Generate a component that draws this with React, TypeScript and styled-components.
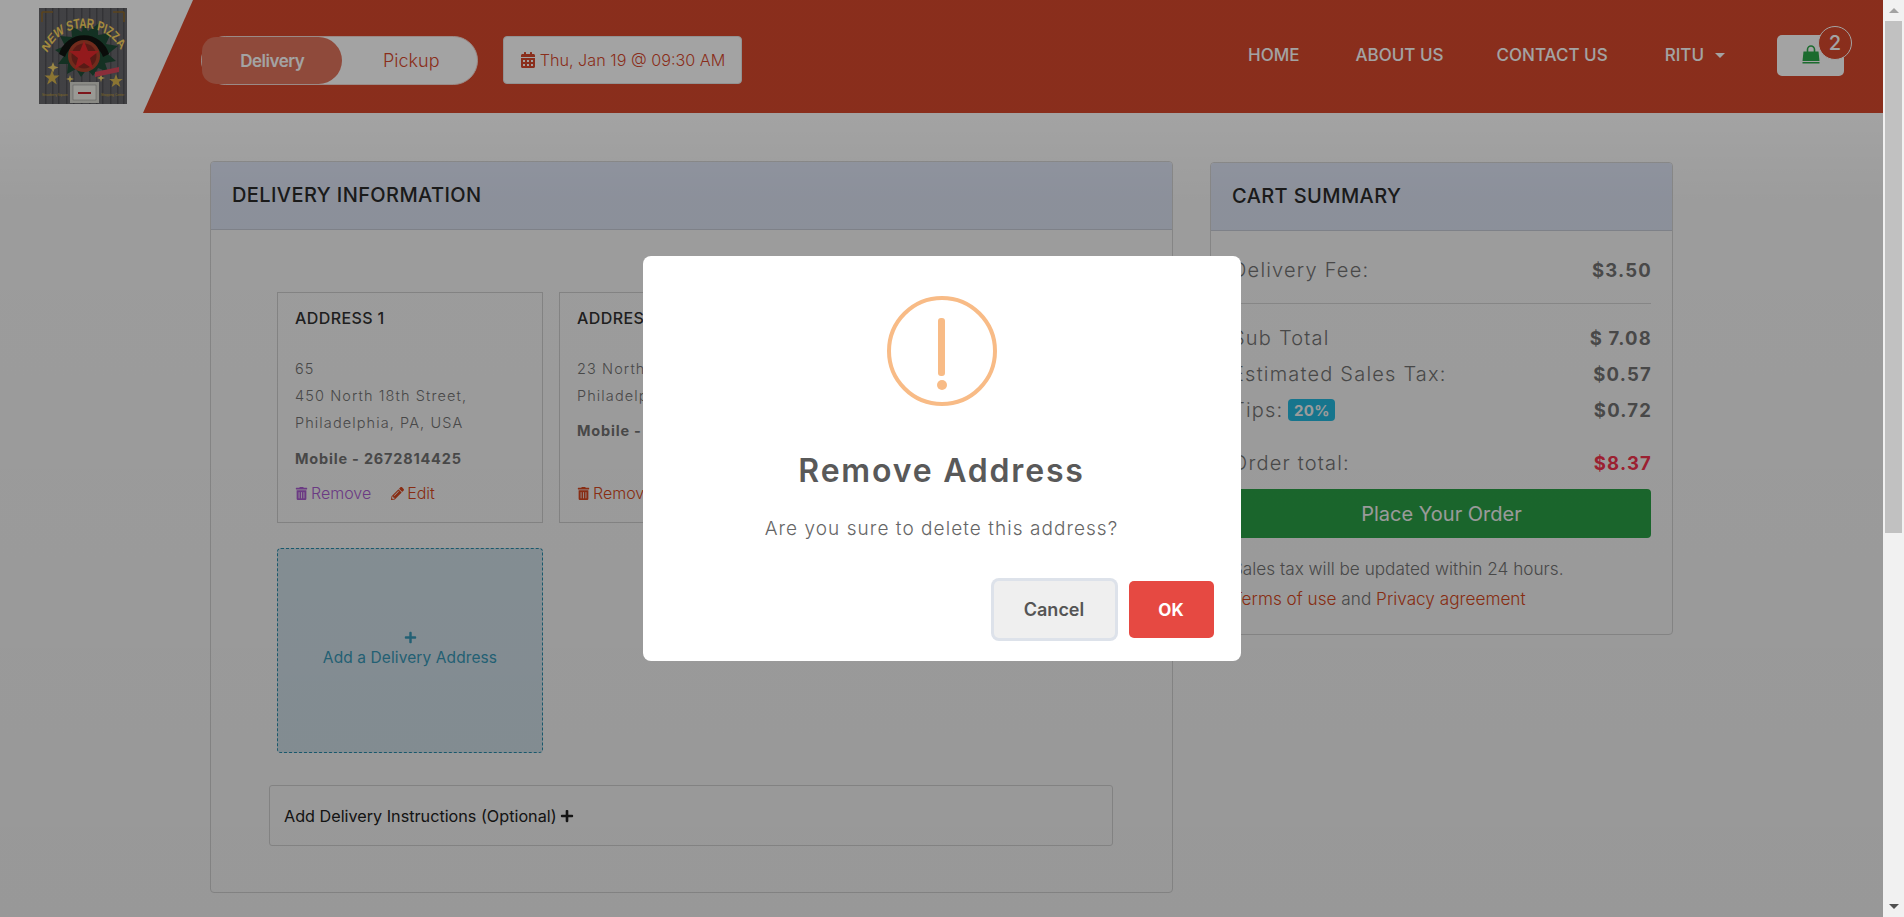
import React from 'react';
import styled, { createGlobalStyle } from 'styled-components';
import { FaCalendarAlt, FaTrashAlt, FaPencilAlt, FaPlus } from 'react-icons/fa';

const FONT = `Inter, "Open Sans", "Liberation Sans", sans-serif`;

const GlobalStyle = createGlobalStyle`
  html, body {
    margin: 0;
    height: 100%;
    overflow: hidden;
    background: #fff;
    font-family: ${FONT};
  }
  * { box-sizing: border-box; }
`;

const Shell = styled.div`
  display: flex;
  width: 1904px;
  height: 917px;
  overflow: hidden;
`;

const Page = styled.div`
  position: relative;
  width: 1883px;
  height: 917px;
  flex: none;
  background: #fff;
`;

const Scrollbar = styled.div`
  width: 21px;
  flex: none;
  background: #f1f1f1;
  display: flex;
  flex-direction: column;
  align-items: center;
`;

const ScrollArrow = styled.div<{ $down?: boolean }>`
  height: 21px;
  flex: none;
  display: flex;
  align-items: center;
  justify-content: center;
  &::before {
    content: '';
    border-left: 5px solid transparent;
    border-right: 5px solid transparent;
    ${p => (p.$down ? 'border-top: 5px solid #505050;' : 'border-bottom: 5px solid #a3a3a3;')}
  }
`;

const ScrollThumb = styled.div`
  width: 17px;
  height: 512px;
  background: #c1c1c1;
`;

const ScrollRest = styled.div`
  flex: 1;
`;

const Header = styled.header`
  display: flex;
  height: 113px;
`;

const LogoSlot = styled.div`
  width: 143px;
  flex: none;
  padding: 8px 0 0 39px;
`;

const RedBar = styled.div`
  flex: 1;
  display: flex;
  align-items: flex-start;
  padding: 36px 39px 0 58px;
  background: #d7482c;
  clip-path: polygon(50px 0, 100% 0, 100% 100%, 0 100%);
`;

const Toggle = styled.div`
  width: 277px;
  height: 49px;
  display: flex;
  align-items: center;
  background: #fff;
  border: 1px solid #f2d8d2;
  border-radius: 25px;
`;

const ToggleOption = styled.div<{ $active?: boolean }>`
  height: 47px;
  display: flex;
  align-items: center;
  justify-content: center;
  width: ${p => (p.$active ? '141px' : '135px')};
  font-size: ${p => (p.$active ? '17px' : '18px')};
  font-weight: ${p => (p.$active ? 600 : 300)};
  letter-spacing: ${p => (p.$active ? '-0.5px' : '0')};
  color: ${p => (p.$active ? '#fff' : '#d7482c')};
  background: ${p => (p.$active ? '#df735c' : 'transparent')};
  border-radius: ${p => (p.$active ? '24px 40px 40px 24px' : '0')};
  padding-left: ${p => (p.$active ? '0' : '3px')};
`;

const DateButton = styled.div`
  margin-left: 25px;
  width: 239px;
  height: 48px;
  display: flex;
  align-items: center;
  justify-content: center;
  gap: 4px;
  background: #fff;
  border: 1px solid #e4e4e4;
  border-radius: 4px;
  color: #d7482c;
  font-size: 16.2px;
  font-weight: 300;
  svg { font-size: 16px; }
`;

const Nav = styled.nav`
  margin-left: auto;
  display: flex;
  align-items: center;
  height: 38px;
`;

const NavLink = styled.a<{ $gap: number }>`
  margin-right: ${p => p.$gap}px;
  display: flex;
  align-items: center;
  gap: 11px;
  color: #fff;
  font-size: 17px;
  font-weight: 500;
  white-space: nowrap;
`;

const Caret = styled.span`
  border-left: 5px solid transparent;
  border-right: 5px solid transparent;
  border-top: 5px solid #fff;
`;

const CartButton = styled.div`
  position: relative;
  width: 67px;
  height: 41px;
  background: #fff;
  border-radius: 5px;
  padding: 10px 0 0 25px;
`;

const CartBadge = styled.span`
  position: absolute;
  top: -9px;
  right: -8px;
  width: 34px;
  height: 34px;
  display: flex;
  align-items: center;
  justify-content: center;
  border: 1px solid #fff;
  border-radius: 50%;
  background: #d7482c;
  color: #fff;
  font-size: 20px;
  font-weight: 500;
`;

const Main = styled.main`
  display: flex;
  align-items: flex-start;
  gap: 37px;
  padding: 48px 0 0 210px;
`;

const Panel = styled.section<{ $width: number; $top?: number }>`
  width: ${p => p.$width}px;
  margin-top: ${p => p.$top ?? 0}px;
  flex: none;
  border: 1px solid #d9d9d9;
  border-radius: 4px;
`;

const PanelHeader = styled.div`
  height: 68px;
  display: flex;
  align-items: center;
  padding: 0 21px 2px;
  background: #e4ebfc;
  border-bottom: 1px solid #ced3de;
  border-radius: 3px 3px 0 0;
`;

const PanelTitle = styled.h2`
  margin: 0;
  font-size: 20px;
  font-weight: 500;
  letter-spacing: 0.4px;
  color: #2b2b2b;
`;

const DeliveryBody = styled.div`
  padding: 62px 60px 46px 66px;
`;

const AddressRow = styled.div`
  display: flex;
  gap: 16px;
`;

const AddressCard = styled.div`
  width: 266px;
  height: 231px;
  flex: none;
  padding: 14px 17px;
  border: 1px solid #d6d6d6;
`;

const AddressTitle = styled.div`
  height: 22px;
  line-height: 22px;
  margin-bottom: 26px;
  font-size: 16px;
  font-weight: 500;
  letter-spacing: 0.4px;
  color: #333;
`;

const AddressLine = styled.div`
  height: 27px;
  line-height: 27px;
  font-size: 14.5px;
  font-weight: 300;
  letter-spacing: 1.1px;
  color: #777;
  white-space: nowrap;
`;

const Mobile = styled.div<{ $top: number }>`
  margin-top: ${p => p.$top}px;
  height: 24px;
  line-height: 24px;
  font-size: 14.5px;
  font-weight: 700;
  letter-spacing: 0.8px;
  color: #777;
  white-space: nowrap;
`;

const AddressActions = styled.div<{ $top: number }>`
  margin-top: ${p => p.$top}px;
  display: flex;
  gap: 20px;
`;

const ActionLink = styled.a<{ $color: string }>`
  display: flex;
  align-items: center;
  gap: 3px;
  height: 24px;
  font-size: 16px;
  font-weight: 300;
  color: ${p => p.$color};
  svg { font-size: 13px; }
`;

const AddCard = styled.div`
  width: 266px;
  height: 205px;
  margin-top: 25px;
  display: flex;
  flex-direction: column;
  align-items: center;
  justify-content: center;
  gap: 4px;
  padding-bottom: 3px;
  background: #d9e9f2;
  border: 1px dashed #2a93b3;
  border-radius: 4px;
  color: #3a9fc0;
  font-size: 15.5px;
  font-weight: 400;
  letter-spacing: 0.1px;
  svg { font-size: 13px; }
`;

const Instructions = styled.div`
  width: 844px;
  height: 61px;
  margin: 32px 0 0 -8px;
  display: flex;
  align-items: center;
  gap: 3px;
  padding: 0 14px;
  border: 1px solid #d9d9d9;
  border-radius: 3px;
  font-size: 16.2px;
  font-weight: 400;
  color: #222;
  svg { font-size: 14px; }
`;

const CartBody = styled.div`
  padding: 21px 21px 20px;
`;

const SummaryRow = styled.div<{ $top?: number }>`
  display: flex;
  justify-content: space-between;
  align-items: center;
  height: 36px;
  margin-top: ${p => p.$top ?? 0}px;
`;

const SummaryLabel = styled.span`
  display: flex;
  align-items: center;
  gap: 5px;
  font-size: 20px;
  font-weight: 300;
  letter-spacing: 1.2px;
  color: #777;
`;

const SummaryValue = styled.span<{ $color?: string }>`
  margin-right: -1px;
  font-size: 18.5px;
  font-weight: 700;
  letter-spacing: 1.2px;
  color: ${p => p.$color ?? '#777'};
`;

const Divider = styled.hr`
  height: 1px;
  margin: 15px 0 0;
  border: 0;
  background: #dcdcdc;
`;

const TipBadge = styled.span`
  width: 47px;
  height: 22px;
  display: inline-flex;
  align-items: center;
  justify-content: center;
  border-radius: 4px;
  background: #25c0e8;
  color: #fff;
  font-size: 15px;
  font-weight: 700;
  letter-spacing: 0.3px;
`;

const PlaceOrder = styled.button`
  display: block;
  width: 100%;
  height: 49px;
  margin-top: 8px;
  border: 0;
  border-radius: 4px;
  background: #2ba748;
  color: #fff;
  font-family: inherit;
  font-size: 20px;
  font-weight: 400;
`;

const Note = styled.div<{ $top?: number }>`
  margin-top: ${p => p.$top ?? 0}px;
  height: 30px;
  line-height: 30px;
  font-size: 17.2px;
  font-weight: 300;
  color: #777;
  white-space: nowrap;
`;

const NoteLink = styled.a`
  color: #e04a20;
`;

const Backdrop = styled.div`
  position: absolute;
  inset: 0;
  display: flex;
  align-items: center;
  justify-content: center;
  background: linear-gradient(rgba(0, 0, 0, 0.36) 0, rgba(0, 0, 0, 0.36) 113px, rgba(0, 0, 0, 0.39) 200px, rgba(0, 0, 0, 0.405) 100%);
`;

const Modal = styled.div`
  width: 598px;
  height: 405px;
  padding-top: 40px;
  display: flex;
  flex-direction: column;
  align-items: center;
  background: #fff;
  border-radius: 8px;
`;

const AlertRing = styled.div`
  width: 110px;
  height: 110px;
  flex: none;
  display: flex;
  flex-direction: column;
  align-items: center;
  padding-top: 18px;
  border: 4px solid #f8bb86;
  border-radius: 50%;
`;

const AlertBar = styled.span`
  width: 7px;
  height: 58px;
  border-radius: 3px;
  background: #f8bb86;
`;

const AlertDot = styled.span`
  width: 10px;
  height: 10px;
  margin-top: 4px;
  border-radius: 50%;
  background: #f8bb86;
`;

const ModalTitle = styled.h2`
  margin: 45px 0 0;
  height: 40px;
  line-height: 40px;
  font-size: 32px;
  font-weight: 600;
  letter-spacing: 1.8px;
  color: #595959;
`;

const ModalText = styled.p`
  margin: 24px 0 0;
  height: 28px;
  line-height: 28px;
  font-size: 19px;
  font-weight: 300;
  letter-spacing: 1.05px;
  color: #666;
`;

const ModalFooter = styled.div`
  align-self: stretch;
  margin-top: 38px;
  padding-right: 27px;
  display: flex;
  justify-content: flex-end;
  gap: 14px;
`;

const CancelButton = styled.button`
  width: 121px;
  height: 57px;
  border: 0;
  border-radius: 5px;
  background: #efefef;
  box-shadow: 0 0 0 3px #dde2ea;
  color: #555;
  font-family: inherit;
  font-size: 18px;
  font-weight: 600;
`;

const OkButton = styled.button`
  width: 85px;
  height: 57px;
  border: 0;
  border-radius: 5px;
  background: #e64942;
  color: #fff;
  font-family: inherit;
  font-size: 17px;
  font-weight: 700;
`;

const LogoArt: React.FC = () => (
  <svg width="88" height="96" viewBox="0 0 88 96" style={{ display: 'block' }}>
    <rect width="88" height="96" fill="#66666a" />
    {[6, 13, 19, 27, 34, 42, 50, 57, 63, 71, 78, 84].map(x => (
      <rect key={x} x={x} y="0" width="1.5" height="96" fill="#505055" />
    ))}
    <path d="M3 4h11M3 4v10M85 4H74M85 4v10" stroke="#8d6a2c" strokeWidth="1.5" fill="none" />
    <path
      d="M44 14l5 9 10-7 0 11 13-2-5 11 12 2-10 8 8 7-11 2 3 9-10-4-5 8-6-7-6 8-5-8-9 5 1-10-10 0 6-8-9-6 10-4-5-10 12 1-1-11 11 6z"
      fill="#1f4d36"
    />
    <path d="M20 46a26 26 0 0 1 50 0l-6 3a20 20 0 0 0-38 0z" fill="#10130f" />
    <g transform="scale(0.72 1)">
      <path id="logoArc" d="M11 46C28 12 94 12 114 43" fill="none" />
      <text fontFamily="Liberation Sans, sans-serif" fontSize="14" fontWeight="700" fill="#ffd860">
        <textPath href="#logoArc" startOffset="50%" textAnchor="middle">NEW STAR PIZZA</textPath>
      </text>
    </g>
    <circle cx="45" cy="48" r="16" fill="#b0432c" />
    <circle cx="45" cy="48" r="12.5" fill="#8a2a22" />
    <path d="M45 33l4 10 11 0-9 7 3 11-9-6-9 6 3-11-9-7 11 0z" fill="#e6282c" />
    <path d="M14 54l1.500 4 4 1.500-4 1.500-1.500 4-1.500-4-4-1.500 4-1.500zM31 67l1 3 3 1-3 1-1 3-1-3-3-1 3-1zM62 66l1 3 3 1-3 1-1 3-1-3-3-1 3-1z" fill="#f2d36b" />
    <path d="M13 62l2 5.500 5.500 0-4.500 3.500 1.800 5.500-4.800-3.400-4.800 3.400 1.800-5.500-4.500-3.500 5.500 0z" fill="#d8b64f" />
    <path d="M77 66l1.800 5 5 0-4 3 1.500 5-4.300-3-4.300 3 1.500-5-4-3 5 0z" fill="#d8b64f" />
    <rect x="31" y="74" width="29" height="21" fill="#d8d8d0" />
    <rect x="34" y="77" width="23" height="15" fill="#efefe8" stroke="#888" strokeWidth="0.5" />
    <rect x="39" y="84" width="13" height="2" fill="#c4232b" />
    <text x="3" y="88" fontSize="3.100" fill="#c9a436" fontFamily="Liberation Sans, sans-serif">Strawberry Square</text>
    <text x="62" y="88" fontSize="3.100" fill="#c9a436" fontFamily="Liberation Sans, sans-serif">Shopping Center</text>
    <path d="M56 64l24-5v5l-24 5z" fill="#d8485a" />
  </svg>
);

const BagIcon: React.FC = () => (
  <svg width="18" height="19" viewBox="0 0 18 19" style={{ display: 'block' }}>
    <path d="M5.500 7V4.500a3.500 3.500 0 0 1 7 0V7" fill="none" stroke="#2ba748" strokeWidth="1.600" />
    <path d="M1.500 6.500h15l1 9.500H.5z" fill="#2ba748" />
    <rect x="0.500" y="17" width="17" height="1.500" fill="#2ba748" />
  </svg>
);

export default function App() {
  return (
    <Shell>
      <GlobalStyle />
      <Page>
        <Header>
          <LogoSlot>
            <LogoArt />
          </LogoSlot>
          <RedBar>
            <Toggle>
              <ToggleOption $active>Delivery</ToggleOption>
              <ToggleOption>Pickup</ToggleOption>
            </Toggle>
            <DateButton>
              <FaCalendarAlt />
              Thu, Jan 19 @ 09:30 AM
            </DateButton>
            <Nav>
              <NavLink $gap={56}>HOME</NavLink>
              <NavLink $gap={53}>ABOUT US</NavLink>
              <NavLink $gap={57}>CONTACT US</NavLink>
              <NavLink $gap={52}>
                RITU <Caret />
              </NavLink>
              <CartButton>
                <BagIcon />
                <CartBadge>2</CartBadge>
              </CartButton>
            </Nav>
          </RedBar>
        </Header>
        <Main>
          <Panel $width={963}>
            <PanelHeader>
              <PanelTitle>DELIVERY INFORMATION</PanelTitle>
            </PanelHeader>
            <DeliveryBody>
              <AddressRow>
                <AddressCard>
                  <AddressTitle>ADDRESS 1</AddressTitle>
                  <AddressLine>65</AddressLine>
                  <AddressLine>450 North 18th Street,</AddressLine>
                  <AddressLine>Philadelphia, PA, USA</AddressLine>
                  <Mobile $top={11}>Mobile - 2672814425</Mobile>
                  <AddressActions $top={10}>
                    <ActionLink $color="#b060d8"><FaTrashAlt />Remove</ActionLink>
                    <ActionLink $color="#e04a20"><FaPencilAlt />Edit</ActionLink>
                  </AddressActions>
                </AddressCard>
                <AddressCard>
                  <AddressTitle>ADDRESS 2</AddressTitle>
                  <AddressLine>23 North</AddressLine>
                  <AddressLine>Philadelphia</AddressLine>
                  <Mobile $top={10}>Mobile - 2672814425</Mobile>
                  <AddressActions $top={38}>
                    <ActionLink $color="#e04a20"><FaTrashAlt />Remove</ActionLink>
                  </AddressActions>
                </AddressCard>
              </AddressRow>
              <AddCard>
                <FaPlus />
                Add a Delivery Address
              </AddCard>
              <Instructions>
                Add Delivery Instructions (Optional) <FaPlus />
              </Instructions>
            </DeliveryBody>
          </Panel>
          <Panel $width={463} $top={1}>
            <PanelHeader>
              <PanelTitle>CART SUMMARY</PanelTitle>
            </PanelHeader>
            <CartBody>
              <SummaryRow>
                <SummaryLabel>Delivery Fee:</SummaryLabel>
                <SummaryValue>$3.50</SummaryValue>
              </SummaryRow>
              <Divider />
              <SummaryRow $top={16}>
                <SummaryLabel>Sub Total</SummaryLabel>
                <SummaryValue>$ 7.08</SummaryValue>
              </SummaryRow>
              <SummaryRow>
                <SummaryLabel>Estimated Sales Tax:</SummaryLabel>
                <SummaryValue>$0.57</SummaryValue>
              </SummaryRow>
              <SummaryRow>
                <SummaryLabel>Tips: <TipBadge>20%</TipBadge></SummaryLabel>
                <SummaryValue>$0.72</SummaryValue>
              </SummaryRow>
              <SummaryRow $top={17}>
                <SummaryLabel>Order total:</SummaryLabel>
                <SummaryValue $color="#ff3450">$8.37</SummaryValue>
              </SummaryRow>
              <PlaceOrder>Place Your Order</PlaceOrder>
              <Note $top={16}>Sales tax will be updated within 24 hours.</Note>
              <Note>
                <NoteLink>Terms of use</NoteLink> and <NoteLink>Privacy agreement</NoteLink>
              </Note>
            </CartBody>
          </Panel>
        </Main>
        <Backdrop>
          <Modal>
            <AlertRing>
              <AlertBar />
              <AlertDot />
            </AlertRing>
            <ModalTitle>Remove Address</ModalTitle>
            <ModalText>Are you sure to delete this address?</ModalText>
            <ModalFooter>
              <CancelButton>Cancel</CancelButton>
              <OkButton>OK</OkButton>
            </ModalFooter>
          </Modal>
        </Backdrop>
      </Page>
      <Scrollbar>
        <ScrollArrow />
        <ScrollThumb />
        <ScrollRest />
        <ScrollArrow $down />
      </Scrollbar>
    </Shell>
  );
}
